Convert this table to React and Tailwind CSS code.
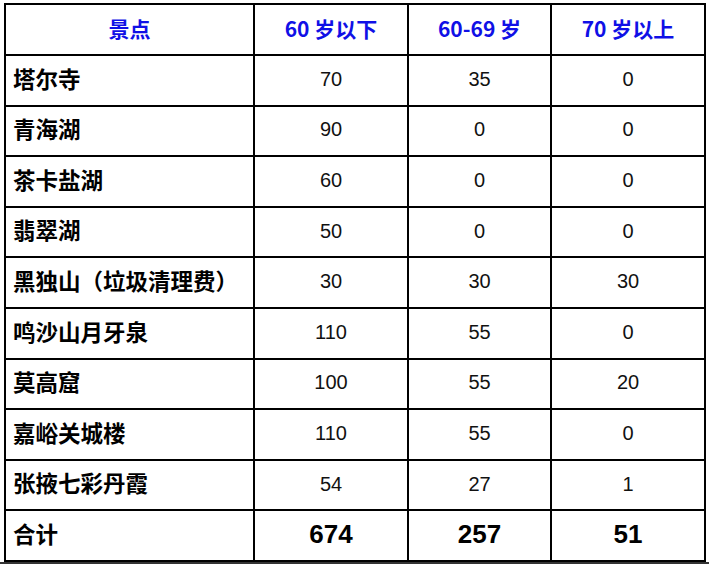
import React from "react";

const ROWS = [
    ["塔尔寺", 70, 35, 0],
    ["青海湖", 90, 0, 0],
    ["茶卡盐湖", 60, 0, 0],
    ["翡翠湖", 50, 0, 0],
    ["黑独山（垃圾清理费）", 30, 30, 30],
    ["鸣沙山月牙泉", 110, 55, 0],
    ["莫高窟", 100, 55, 20],
    ["嘉峪关城楼", 110, 55, 0],
    ["张掖七彩丹霞", 54, 27, 1],
];

const cjk = { fontFamily: '"Noto Sans CJK SC", "Noto Sans", sans-serif' };
const arial = { fontFamily: '"Liberation Sans", Arial, sans-serif' };

export default function App() {
    const totals = [1, 2, 3].map(i => ROWS.reduce((s, r) => s + r[i], 0));

    return (
        <div className="w-[709px] h-[565px] bg-white overflow-hidden">
            <div className="pl-[4px] pt-[3px]">
                <table className="w-[700px] border-collapse table-fixed border-2 border-black">
                    <colgroup>
                        <col className="w-[249px]" />
                        <col className="w-[154px]" />
                        <col className="w-[143px]" />
                        <col className="w-[154px]" />
                    </colgroup>
                    <thead>
                        <tr className="h-[51px]">
                            {["景点", "60 岁以下", "60-69 岁", "70 岁以上"].map(h => (
                                <th key={h} style={cjk} className="border-2 border-black text-center text-[21px] leading-none font-bold text-[#1010e6] p-0 pb-[3px]">
                                    {h}
                                </th>
                            ))}
                        </tr>
                    </thead>
                    <tbody>
                        {ROWS.map(r => (
                            <tr key={r[0]} className="h-[50.6px]">
                                <td style={cjk} className="border-2 border-black pl-[7px] pb-[5px] text-[22.5px] leading-none font-bold text-black whitespace-nowrap">{r[0]}</td>
                                {r.slice(1).map((v, i) => (
                                    <td key={i} style={arial} className="border-2 border-black text-center text-[20px] pb-[3px] text-[#111]">{v}</td>
                                ))}
                            </tr>
                        ))}
                        <tr className="h-[50.6px]">
                            <td style={cjk} className="border-2 border-black pl-[7px] pb-[5px] text-[22.5px] leading-none font-bold text-black">合计</td>
                            {totals.map((v, i) => (
                                <td key={i} style={arial} className="border-2 border-black text-center text-[26px] pb-[3px] font-bold text-black">{v}</td>
                            ))}
                        </tr>
                    </tbody>
                </table>
            </div>
            <div className="h-[2px] bg-[#333]" />
        </div>
    );
}
